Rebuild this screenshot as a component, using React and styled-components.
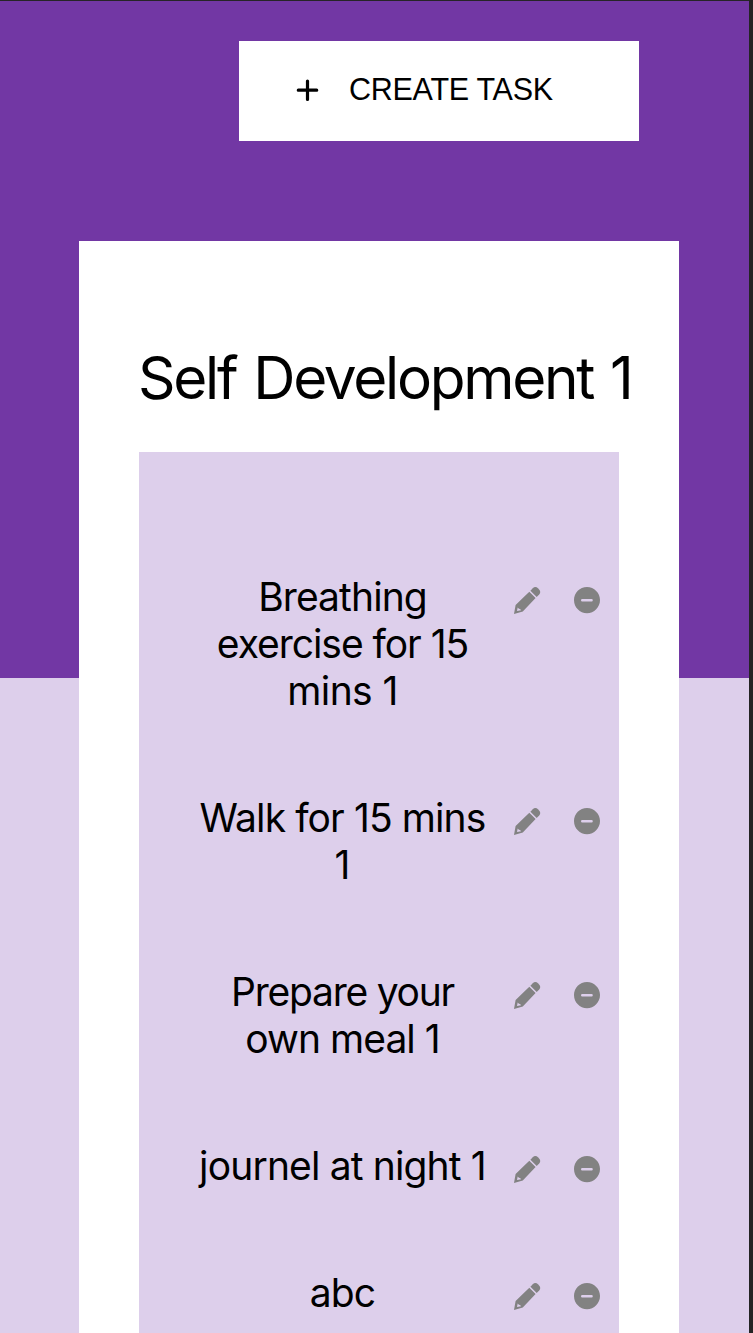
import React from 'react';
import styled, { createGlobalStyle } from 'styled-components';

const GlobalStyle = createGlobalStyle`
  * { box-sizing: border-box; }
  body { margin: 0; font-family: Inter, "Liberation Sans", sans-serif; color: #000; }
`;

const Page = styled.main`
  height: 1333px;
  overflow: hidden;
  padding: 40px 0 0;
  border-top: 1px solid #262427;
  border-right: 4px solid #242424;
  background: linear-gradient(#7237a4 677px, #ddcfeb 677px);
`;

const CreateButton = styled.button`
  display: flex;
  align-items: center;
  width: 400px;
  height: 100px;
  margin: 0 0 0 239px;
  padding: 0 0 3px 57px;
  gap: 30px;
  border: 0;
  background: #fff;
  color: #000;
  font: 30.5px "Liberation Sans", sans-serif;
  letter-spacing: -0.27px;
  white-space: nowrap;
`;

const Card = styled.section`
  width: 600px;
  height: 1200px;
  margin: 100px 0 0 79px;
  padding: 101px 60px 0;
  background: #fff;
`;

const Title = styled.h1`
  margin: 0 0 0 -1px;
  height: 110px;
  font-size: 58.5px;
  font-weight: 400;
  line-height: 72px;
  letter-spacing: -2.3px;
  word-spacing: 2.8px;
  white-space: nowrap;
`;

const TaskList = styled.ul`
  list-style: none;
  margin: 0;
  height: 1000px;
  padding: 121px 18px 0 59px;
  background: #ddcfeb;
`;

const Task = styled.li`
  display: flex;
  align-items: flex-start;
  margin-bottom: 80px;
`;

const TaskName = styled.div`
  width: 289px;
  text-align: center;
  font-size: 39px;
  line-height: 47px;
  white-space: nowrap;
`;

const Line = styled.div`
  letter-spacing: ${({ $tracking }) => $tracking}px;
`;

const Actions = styled.div`
  display: flex;
  gap: 32px;
  margin: 13px 0 0 26px;
`;

const Icon = styled.svg`
  display: block;
  width: 28px;
  height: 28px;
  fill: #828282;
`;

const PencilIcon = () => (
  <Icon viewBox="0 0 28 28">
    <path d="M16.3 5.8 22.6 11.9 9.8 25.6 1 27.9 2.6 18.9ZM4.7 21.4 4 25 8.2 24.2 7 22.9 5.9 22.7Z" fillRule="evenodd" />
    <path d="M17.4 4.7 19.8 2.2Q22.3-.1 25.2 2.4 28.7 5.6 26.2 8.4L23.7 10.9Z" />
  </Icon>
);

const MinusIcon = () => (
  <Icon viewBox="0 0 28 28">
    <path fillRule="evenodd" d="M14 .9C21.2.9 27 6.9 27 14.1S21.2 27.3 14 27.3 1 21.4 1 14.1 6.8.9 14 .9ZM9.2 13.1a1.2 1.2 0 0 0 0 2.4h9.4a1.2 1.2 0 0 0 0-2.4Z" />
  </Icon>
);

const tasks = [
  [['Breathing', -0.9], ['exercise for 15', -1.04], ['mins 1', -0.6]],
  [['Walk for 15 mins', -0.9], ['1', 0]],
  [['Prepare your', -1.25], ['own meal 1', -0.95]],
  [['journel at night 1', -0.85]],
  [['abc', -0.9]],
];

export default function App() {
  return (
    <Page>
      <GlobalStyle />
      <CreateButton>
        <svg width="23" height="22" viewBox="0 0 23 22" stroke="#000" strokeWidth="3.2" strokeLinecap="round">
          <path d="M11.5 2v18.4M2.3 11.2h18.4" />
        </svg>
        CREATE TASK
      </CreateButton>
      <Card>
        <Title>Self Development 1</Title>
        <TaskList>
          {tasks.map((lines) => (
            <Task key={lines[0][0]}>
              <TaskName>
                {lines.map(([text, tracking]) => <Line key={text} $tracking={tracking}>{text}</Line>)}
              </TaskName>
              <Actions>
                <PencilIcon />
                <MinusIcon />
              </Actions>
            </Task>
          ))}
        </TaskList>
      </Card>
    </Page>
  );
}
